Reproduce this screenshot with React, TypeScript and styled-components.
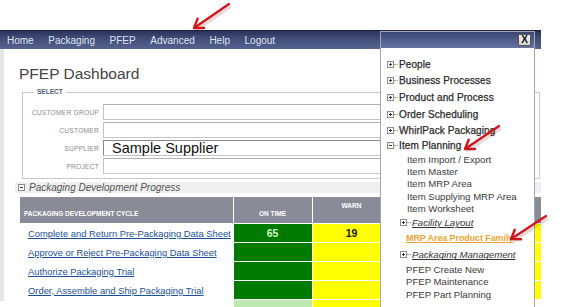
import React from 'react';
import styled, { createGlobalStyle } from 'styled-components';

const GlobalStyle = createGlobalStyle`
  html, body {
    margin: 0;
    padding: 0;
    background: #ffffff;
    font-family: 'Liberation Sans', Arial, sans-serif;
  }
`;

const Page = styled.div`
  position: relative;
  width: 563px;
  height: 307px;
  overflow: hidden;
  background: #ffffff;
`;

const Shell = styled.div`
  width: 541px;
  padding-top: 30px;
`;

const NavBar = styled.nav`
  height: 18px;
  display: flex;
  align-items: center;
  gap: 14.6px;
  padding-left: 7px;
  background: linear-gradient(#283158 0%, #3c4773 30%, #56628f 100%);
  border-top: 1px solid #1e2548;
`;

const NavItem = styled.span`
  color: #dfe3f0;
  font-size: 10px;
`;

const Content = styled.main`
  border-left: 4px solid #e6e6e6;
  height: 252px;
  display: flex;
  flex-direction: column;
`;

const Title = styled.h1`
  margin: 16px 0 0 15px;
  font-size: 15.5px;
  font-weight: normal;
  color: #444;
  line-height: 18px;
`;

const SelectBox = styled.fieldset`
  margin: 5px 0 0 18px;
  padding: 8px 0 4px 0;
  width: 518px;
  box-sizing: border-box;
  border: 1px solid #c8c8c8;
  display: grid;
  grid-template-columns: 76px 1fr;
  row-gap: 2px;
  column-gap: 4px;
  align-items: center;
`;

const Legend = styled.legend`
  margin-left: 11px;
  padding: 0 3px;
  font-size: 6.5px;
  font-weight: bold;
  color: #4b5f82;
  line-height: 8px;
`;

const Label = styled.label`
  text-align: right;
  font-size: 6.7px;
  color: #8a8a8a;
  letter-spacing: 0.2px;
`;

const Field = styled.div<{ $inset?: boolean }>`
  height: 16px;
  margin-right: 5px;
  box-sizing: border-box;
  border: 1px solid #c4c4c4;
  border-top-color: ${(p) => (p.$inset ? '#888' : '#b0b0b0')};
  border-left-color: ${(p) => (p.$inset ? '#888' : '#c4c4c4')};
  background: #fff;
  font-size: 14.5px;
  line-height: 15px;
  color: #111;
  padding-left: 8px;
`;

const ProgressBar = styled.div`
  margin: 3px 0 0 11px;
  width: 526px;
  height: 15px;
  background: #efefef;
  display: flex;
  align-items: center;
  gap: 4px;
  padding-left: 3px;
  box-sizing: border-box;
`;

const ProgressTitle = styled.span`
  font-size: 10px;
  font-style: italic;
  color: #555;
`;

const Table = styled.table`
  margin: 4px 0 0 16px;
  border-collapse: collapse;
  table-layout: fixed;
  width: 521px;
`;

const Th = styled.th<{ $align?: string; $top?: boolean }>`
  height: 26px;
  padding: ${(p) => (p.$top ? '5px 4px 0' : '0 4px 6px')};
  vertical-align: ${(p) => (p.$top ? 'top' : 'bottom')};
  text-align: ${(p) => p.$align || 'center'};
  background: #898b98;
  color: #fff;
  font-size: 6.5px;
  font-weight: bold;
  border-left: 1px solid #fff;
  box-sizing: border-box;
  &:first-child {
    border-left: none;
  }
`;

const Td = styled.td<{ $tone?: 'green' | 'yellow' | 'pale' }>`
  height: 19px;
  padding: 0;
  box-sizing: border-box;
  border-left: 1px solid #fff;
  border-top: 1px solid #fff;
  text-align: center;
  font-size: 10.5px;
  font-weight: bold;
  white-space: nowrap;
  background: ${(p) =>
    p.$tone === 'green' ? '#007a00' : p.$tone === 'yellow' ? '#ffff00' : p.$tone === 'pale' ? '#bfe8b0' : 'transparent'};
  color: ${(p) => (p.$tone === 'green' ? '#d6f5c8' : '#111')};
  &:first-child {
    border-left: none;
    text-align: left;
    padding-left: 8px;
    font-weight: normal;
  }
`;

const CycleLink = styled.a`
  color: #1a4f9c;
  text-decoration: underline;
  font-size: 9.4px;
  cursor: pointer;
`;

const Menu = styled.div`
  position: absolute;
  left: 380px;
  top: 31px;
  width: 155px;
  height: 290px;
  box-sizing: border-box;
  border: 1px solid #a5a8b4;
  background: #fff;
`;

const MenuHeader = styled.div`
  height: 16px;
  background: linear-gradient(#3a4574 0%, #56628f 60%, #67739f 100%);
  display: flex;
  justify-content: flex-end;
  align-items: center;
  padding-right: 3px;
`;

const CloseButton = styled.button`
  width: 13px;
  height: 12px;
  padding: 0;
  border: 1px solid #555;
  background: linear-gradient(#f4f4f4, #d2d2d2);
  font-family: 'Liberation Sans', Arial, sans-serif;
  font-size: 10px;
  font-weight: bold;
  line-height: 10px;
  color: #111;
`;

const Tree = styled.ul`
  list-style: none;
  margin: 0;
  padding: 8px 0 0 6px;
`;

const Node = styled.li<{ $indent?: number; $h?: number; $gap?: number }>`
  display: flex;
  align-items: center;
  height: ${(p) => p.$h || 16.6}px;
  padding-left: ${(p) => p.$indent || 0}px;
  padding-top: ${(p) => p.$gap || 0}px;
`;

const Toggle = styled.span`
  position: relative;
  width: 7px;
  height: 7px;
  box-sizing: border-box;
  border: 1px solid #8a8a8a;
  background: #fff;
  flex: none;
  &::before {
    content: '';
    position: absolute;
    left: 1px;
    top: 2px;
    width: 3px;
    height: 1px;
    background: #333;
  }
`;

const Plus = styled(Toggle)`
  &::after {
    content: '';
    position: absolute;
    left: 2px;
    top: 1px;
    width: 1px;
    height: 3px;
    background: #333;
  }
`;

const Dots = styled.span`
  width: 4px;
  margin: 0 1px 0 0;
  border-top: 1px dotted #999;
  flex: none;
`;

const NodeText = styled.span`
  font-size: 10px;
  color: #2a2a2a;
  -webkit-text-stroke: 0.25px #2a2a2a;
  letter-spacing: 0.1px;
`;

const SubText = styled.span`
  font-size: 9.6px;
  color: #3a3a3a;
`;

const GroupText = styled.span`
  font-size: 9.6px;
  font-style: italic;
  text-decoration: underline;
  color: #333;
`;

const ActiveText = styled.span`
  font-size: 9px;
  font-weight: bold;
  letter-spacing: -0.1px;
  text-decoration: underline;
  color: #eda334;
`;

const Overlay = styled.svg`
  position: absolute;
  left: 0;
  top: 0;
  pointer-events: none;
`;

function Arrow({ x1, y1, x2, y2 }: { x1: number; y1: number; x2: number; y2: number }) {
  const a = Math.atan2(y2 - y1, x2 - x1);
  const len = 10;
  const w1 = [x2 - len * Math.cos(a - 0.6), y2 - len * Math.sin(a - 0.6)];
  const w2 = [x2 - len * Math.cos(a + 0.6), y2 - len * Math.sin(a + 0.6)];
  return (
    <g>
      <line x1={x1 + 1.5} y1={y1 + 2} x2={x2 + 1.5} y2={y2 + 2} stroke="rgba(120,0,0,0.15)" strokeWidth={4} />
      <line x1={x1} y1={y1} x2={x2} y2={y2} stroke="#d1151c" strokeWidth={2.2} strokeLinecap="round" />
      <polyline
        points={`${w1[0]},${w1[1]} ${x2},${y2} ${w2[0]},${w2[1]}`}
        fill="none"
        stroke="#d1151c"
        strokeWidth={2.4}
        strokeLinecap="round"
        strokeLinejoin="round"
      />
    </g>
  );
}

const cycles = [
  { name: 'Complete and Return Pre-Packaging Data Sheet', onTime: '65', warn: '19' },
  { name: 'Approve or Reject Pre-Packaging Data Sheet', onTime: '', warn: '' },
  { name: 'Authorize Packaging Trial', onTime: '', warn: '' },
  { name: 'Order, Assemble and Ship Packaging Trial', onTime: '', warn: '' },
];

const topNodes = ['People', 'Business Processes', 'Product and Process', 'Order Scheduling', 'WhirlPack Packaging'];
const planning = ['Item Import / Export', 'Item Master', 'Item MRP Area', 'Item Supplying MRP Area', 'Item Worksheet'];
const pfep = ['PFEP Create New', 'PFEP Maintenance', 'PFEP Part Planning'];

export default function App() {
  return (
    <Page>
      <GlobalStyle />
      <Shell>
        <NavBar>
          {['Home', 'Packaging', 'PFEP', 'Advanced', 'Help', 'Logout'].map((n) => (
            <NavItem key={n}>{n}</NavItem>
          ))}
        </NavBar>
        <Content>
          <Title>PFEP Dashboard</Title>
          <SelectBox>
            <Legend>SELECT</Legend>
            <Label>CUSTOMER GROUP</Label>
            <Field />
            <Label>CUSTOMER</Label>
            <Field />
            <Label>SUPPLIER</Label>
            <Field $inset>Sample Supplier</Field>
            <Label>PROJECT</Label>
            <Field />
          </SelectBox>
          <ProgressBar>
            <Toggle />
            <ProgressTitle>Packaging Development Progress</ProgressTitle>
          </ProgressBar>
          <Table>
            <colgroup>
              <col style={{ width: 213 }} />
              <col style={{ width: 79 }} />
              <col style={{ width: 79 }} />
              <col />
            </colgroup>
            <thead>
              <tr>
                <Th $align="left">PACKAGING DEVELOPMENT CYCLE</Th>
                <Th>ON TIME</Th>
                <Th $top>WARN</Th>
                <Th>LATE</Th>
              </tr>
            </thead>
            <tbody>
              {cycles.map((c) => (
                <tr key={c.name}>
                  <Td>
                    <CycleLink>{c.name}</CycleLink>
                  </Td>
                  <Td $tone="green">{c.onTime}</Td>
                  <Td $tone="yellow">{c.warn}</Td>
                  <Td $tone="yellow" />
                </tr>
              ))}
              <tr>
                <Td />
                <Td $tone="pale" />
                <Td $tone="yellow" />
                <Td />
              </tr>
            </tbody>
          </Table>
        </Content>
      </Shell>

      <Menu>
        <MenuHeader>
          <CloseButton type="button">X</CloseButton>
        </MenuHeader>
        <Tree>
          {topNodes.map((n) => (
            <Node key={n}>
              <Plus />
              <Dots />
              <NodeText>{n}</NodeText>
            </Node>
          ))}
          <Node $h={14}>
            <Toggle />
            <Dots />
            <NodeText>Item Planning</NodeText>
          </Node>
          {planning.map((n) => (
            <Node key={n} $indent={20} $h={12.3}>
              <SubText>{n}</SubText>
            </Node>
          ))}
          <Node $indent={13} $h={15} $gap={1}>
            <Plus />
            <Dots />
            <GroupText>Facility Layout</GroupText>
          </Node>
          <Node $indent={19} $h={16}>
            <ActiveText>MRP Area Product Family</ActiveText>
          </Node>
          <Node $indent={13} $h={17}>
            <Plus />
            <Dots />
            <GroupText>Packaging Management</GroupText>
          </Node>
          {pfep.map((n) => (
            <Node key={n} $indent={19} $h={12.3}>
              <SubText>{n}</SubText>
            </Node>
          ))}
        </Tree>
      </Menu>

      <Overlay width={563} height={307}>
        <Arrow x1={229} y1={4} x2={194} y2={28} />
        <Arrow x1={499} y1={126} x2={465} y2={149} />
        <Arrow x1={546} y1={216} x2={511} y2={239} />
      </Overlay>
    </Page>
  );
}
